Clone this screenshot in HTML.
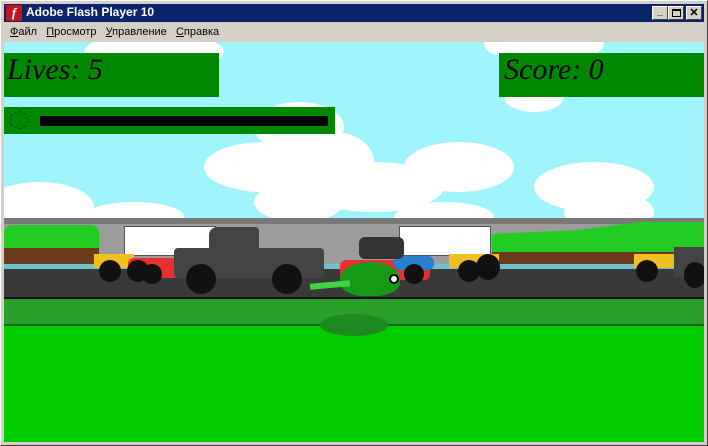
<!DOCTYPE html><html><head><meta charset="utf-8"><style>
*{margin:0;padding:0;box-sizing:border-box}
body{width:708px;height:446px;background:#d4d0c8;position:relative;overflow:hidden;font-family:"Liberation Sans",sans-serif}
.a{position:absolute}
.c{position:absolute;background:#fff;border-radius:50%}
</style></head><body>
<div class="a" style="left:0;top:0;width:708px;height:446px;border:1px solid #fff;border-right-color:#404040;border-bottom-color:#404040"></div>
<div class="a" style="left:4px;top:4px;width:700px;height:18px;background:#0a246a"></div>
<div class="a" style="left:6px;top:5px;width:16px;height:16px;background:#c4161c;color:#fff;font:italic bold 13px 'Liberation Serif';text-align:center;line-height:16px">f</div>
<div class="a" style="left:26px;top:5px;color:#fff;font-weight:bold;font-size:12px">Adobe Flash Player 10</div>
<div class="a" style="left:652px;top:6px;width:16px;height:14px;background:#d4d0c8;border:1px solid #fff;border-right-color:#404040;border-bottom-color:#404040;font-size:10px;text-align:center;font-weight:bold;line-height:10px">_</div>
<div class="a" style="left:668px;top:6px;width:16px;height:14px;background:#d4d0c8;border:1px solid #fff;border-right-color:#404040;border-bottom-color:#404040"><div class="a" style="left:3px;top:2px;width:9px;height:8px;border:1px solid #000;border-top-width:2px"></div></div>
<div class="a" style="left:686px;top:6px;width:16px;height:14px;background:#d4d0c8;border:1px solid #fff;border-right-color:#404040;border-bottom-color:#404040;font-size:11px;text-align:center;font-weight:bold;line-height:12px">✕</div>
<div class="a" style="left:10px;top:26px;font-size:11px;color:#000;word-spacing:0"><u>Ф</u>айл&nbsp;&nbsp;&nbsp;<u>П</u>росмотр&nbsp;&nbsp;&nbsp;<u>У</u>правление&nbsp;&nbsp;&nbsp;<u>С</u>правка</div>
<div class="a" style="left:4px;top:42px;width:700px;height:400px;background:#9ff5fb;overflow:hidden">
 <!-- clouds -->
 <div class="c" style="left:80px;top:-10px;width:140px;height:40px"></div>
 <div class="c" style="left:250px;top:60px;width:90px;height:50px"></div>
 <div class="c" style="left:200px;top:100px;width:120px;height:50px"></div>
 <div class="c" style="left:290px;top:90px;width:80px;height:60px"></div>
 <div class="c" style="left:300px;top:120px;width:140px;height:50px"></div>
 <div class="c" style="left:400px;top:100px;width:110px;height:50px"></div>
 <div class="c" style="left:480px;top:-15px;width:120px;height:35px"></div>
 <div class="c" style="left:250px;top:140px;width:90px;height:40px"></div>
 <div class="c" style="left:-20px;top:140px;width:110px;height:50px"></div>
 <div class="c" style="left:80px;top:160px;width:100px;height:30px"></div>
 <div class="c" style="left:530px;top:120px;width:120px;height:50px"></div>
 <div class="c" style="left:560px;top:150px;width:90px;height:40px"></div>
 <div class="c" style="left:390px;top:160px;width:100px;height:30px"></div>
 <div class="c" style="left:500px;top:40px;width:60px;height:30px"></div>
 <!-- wall -->
 <div class="a" style="left:0;top:176px;width:700px;height:84px;background:#9c9c9c"></div>
 <div class="a" style="left:0;top:176px;width:700px;height:6px;background:#7a7a7a"></div>
 <!-- trees left -->
 <div class="a" style="left:0;top:183px;width:95px;height:28px;background:#22cc22;border-radius:8px 8px 0 0"></div>
 <div class="a" style="left:0;top:206px;width:95px;height:18px;background:#6b3a1a"></div>
 <!-- trees right -->
 <div class="a" style="left:488px;top:180px;width:212px;height:40px;background:#22cc22;clip-path:polygon(0 30%,40% 20%,70% 0,100% 0,100% 100%,0 100%)"></div>
 <div class="a" style="left:488px;top:210px;width:212px;height:20px;background:#6b3a1a"></div>
 <!-- road -->
 <div class="a" style="left:0;top:222px;width:700px;height:6px;background:#70c0d0"></div>
 <div class="a" style="left:0;top:227px;width:700px;height:28px;background:#3a3a3a"></div>
 <div class="a" style="left:0;top:255px;width:700px;height:2px;background:#111"></div>
 <div class="a" style="left:0;top:257px;width:700px;height:26px;background:#2aa02a"></div>
 <div class="a" style="left:0;top:282px;width:700px;height:2px;background:#116611"></div>
 <div class="a" style="left:0;top:284px;width:700px;height:116px;background:#00cc00"></div>
 <div class="a" style="left:316px;top:272px;width:68px;height:22px;background:#1f8a1f;border-radius:50%"></div>
 <!-- trailers -->
 <div class="a" style="left:120px;top:184px;width:92px;height:30px;background:#fff;border:1px solid #555"></div>
 <div class="a" style="left:395px;top:184px;width:92px;height:30px;background:#fff;border:1px solid #555"></div>
 <!-- tractors yellow -->
 <div class="a" style="left:90px;top:212px;width:40px;height:14px;background:#f0c020"></div>
 <div class="a" style="left:445px;top:212px;width:50px;height:14px;background:#f0c020"></div>
 <div class="a" style="left:630px;top:212px;width:40px;height:14px;background:#f0c020"></div>
 <!-- red cars -->
 <div class="a" style="left:124px;top:216px;width:60px;height:20px;background:#e83030;border-radius:6px"></div>
 <div class="a" style="left:336px;top:218px;width:90px;height:20px;background:#e83030;border-radius:6px"></div>
 <div class="a" style="left:390px;top:214px;width:40px;height:14px;background:#2b7fd0;border-radius:6px"></div>
 <!-- black truck -->
 <div class="a" style="left:170px;top:206px;width:150px;height:30px;background:#444;border-radius:4px"></div>
 <div class="a" style="left:205px;top:185px;width:50px;height:26px;background:#444;border-radius:8px 4px 0 0"></div>
 <div class="a" style="left:355px;top:195px;width:45px;height:22px;background:#333;border-radius:6px"></div>
 <div class="a" style="left:670px;top:205px;width:30px;height:30px;background:#444"></div>
 <!-- wheels -->
 <div class="c" style="left:182px;top:222px;width:30px;height:30px;background:#111"></div>
 <div class="c" style="left:268px;top:222px;width:30px;height:30px;background:#111"></div>
 <div class="c" style="left:138px;top:222px;width:20px;height:20px;background:#111"></div>
 <div class="c" style="left:95px;top:218px;width:22px;height:22px;background:#111"></div>
 <div class="c" style="left:123px;top:218px;width:22px;height:22px;background:#111"></div>
 <div class="c" style="left:454px;top:218px;width:22px;height:22px;background:#111"></div>
 <div class="c" style="left:472px;top:212px;width:24px;height:26px;background:#111"></div>
 <div class="c" style="left:400px;top:222px;width:20px;height:20px;background:#111"></div>
 <div class="c" style="left:632px;top:218px;width:22px;height:22px;background:#111"></div>
 <div class="c" style="left:680px;top:220px;width:22px;height:26px;background:#111"></div>
 <!-- frog -->
 <div class="a" style="left:336px;top:220px;width:60px;height:34px;background:#159a15;border-radius:50% 50% 40% 40%"></div>
 <div class="a" style="left:306px;top:240px;width:40px;height:6px;background:#3ed63e;transform:rotate(-5deg)"></div>
 <div class="c" style="left:385px;top:232px;width:10px;height:10px;background:#fff;border:2px solid #000"></div>
 <!-- HUD -->
 <div class="a" style="left:0;top:11px;width:215px;height:44px;background:#008800"></div>
 <div class="a" style="left:3px;top:11px;font:italic 30px 'Liberation Serif',serif;color:#000">Lives: 5</div>
 <div class="a" style="left:495px;top:11px;width:205px;height:44px;background:#008800"></div>
 <div class="a" style="left:500px;top:11px;font:italic 30px 'Liberation Serif',serif;color:#000">Score: 0</div>
 <div class="a" style="left:0;top:65px;width:331px;height:27px;background:#008800"></div>
 <div class="c" style="left:6px;top:69px;width:18px;height:18px;background:none;border:1px dashed #004400"></div>
 <div class="a" style="left:36px;top:74px;width:288px;height:10px;background:#000"></div>
</div>
</body></html>
